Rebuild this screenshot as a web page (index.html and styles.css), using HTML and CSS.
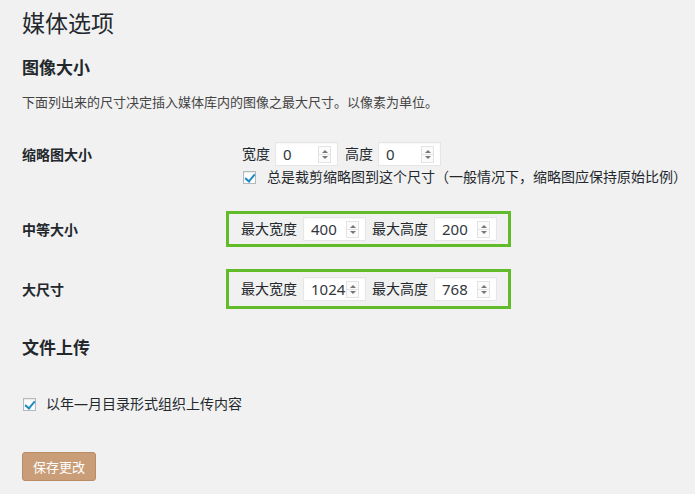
FILE: index.html
```html
<!doctype html>
<html lang="zh-CN">
<head>
  <meta charset="utf-8">
  <title>媒体选项</title>
  <link rel="stylesheet" href="styles.css">
</head>
<body>
  <div class="wrap">
    <h1>媒体选项</h1>
    <h2>图像大小</h2>
    <p class="desc">下面列出来的尺寸决定插入媒体库内的图像之最大尺寸。以像素为单位。</p>

    <table class="form-table">
      <tr>
        <th>缩略图大小</th>
        <td>
          <div class="fields">
            <span class="lbl">宽度</span>
            <span class="num"><span class="val">0</span><span class="spin"></span></span>
            <span class="lbl">高度</span>
            <span class="num"><span class="val">0</span><span class="spin"></span></span>
          </div>
          <label class="check-line">
            <span class="checkbox checked"></span>
            总是裁剪缩略图到这个尺寸（一般情况下，缩略图应保持原始比例）
          </label>
        </td>
      </tr>
      <tr>
        <th>中等大小</th>
        <td>
          <div class="fields mark mark-sm">
            <span class="lbl">最大宽度</span>
            <span class="num"><span class="val">400</span><span class="spin"></span></span>
            <span class="lbl">最大高度</span>
            <span class="num"><span class="val">200</span><span class="spin"></span></span>
          </div>
        </td>
      </tr>
      <tr>
        <th>大尺寸</th>
        <td>
          <div class="fields mark mark-lg">
            <span class="lbl">最大宽度</span>
            <span class="num"><span class="val">1024</span><span class="spin"></span></span>
            <span class="lbl">最大高度</span>
            <span class="num"><span class="val">768</span><span class="spin"></span></span>
          </div>
        </td>
      </tr>
    </table>

    <h2 class="upload-title">文件上传</h2>
    <label class="check-line upload-line">
      <span class="checkbox checked"></span>
      以年—月目录形式组织上传内容
    </label>

    <button class="button-primary">保存更改</button>
  </div>
</body>
</html>
```

FILE: styles.css
```css
/* Page */
* { box-sizing: border-box; }
body {
  margin: 0;
  background: #f1f1f1;
  color: #23282d;
  font-family: "Noto Sans", "Noto Sans CJK SC", sans-serif;
  font-size: 14px;
}
.wrap {
  padding: 0 22px;
}
h1 {
  margin: 8px 0 0;
  font-size: 23px;
  font-weight: 400;
  line-height: 30px;
}
h2 {
  margin: 18px 0 0;
  font-size: 17px;
  font-weight: 700;
  line-height: 24px;
}
.desc {
  margin: 12px 0 0;
  font-size: 13px;
  line-height: 20px;
  color: #444;
}
/* Settings table */
.form-table {
  width: 100%;
  margin-top: 15px;
  border-collapse: collapse;
  table-layout: fixed;
}
.form-table th {
  width: 210px;
  padding: 19px 20px 19px 0;
  text-align: left;
  vertical-align: top;
  font-size: 14px;
  font-weight: 700;
  line-height: 18px;
}
.form-table td {
  padding: 15px 0 15px 10px;
  vertical-align: top;
  white-space: nowrap;
}
.fields {
  display: flex;
  align-items: center;
  height: 24px;
}
.lbl {
  margin-right: 5px;
  line-height: 20px;
}
.num {
  display: flex;
  align-items: center;
  flex-shrink: 0;
  width: 63px;
  height: 24px;
  margin-right: 7px;
  padding: 0 6px 0 7px;
  background: #fff;
  border: 1px solid #e6e6e6;
  box-shadow: inset 0 1px 2px rgba(0, 0, 0, 0.04);
  font-size: 15px;
  color: #32373c;
}
.val {
  flex: 1;
  line-height: 20px;
}
.spin {
  width: 13px;
  height: 17px;
  border: 1px solid #e3e3e3;
  background:
    linear-gradient(#e3e3e3, #e3e3e3) center / 100% 1px no-repeat,
    #fbfbfb;
  position: relative;
}
.spin::before,
.spin::after {
  content: "";
  position: absolute;
  left: 3px;
  border-left: 3px solid transparent;
  border-right: 3px solid transparent;
}
.spin::before {
  top: 3px;
  border-bottom: 3px solid #777;
}
.spin::after {
  bottom: 3px;
  border-top: 3px solid #777;
}
/* Highlight boxes */
.mark {
  border: 3px solid #62bb28;
  width: 285px;
  margin-left: -16px;
  padding-left: 12px;
}
.mark-sm {
  height: 36px;
  margin-top: -6px;
}
.mark-lg {
  height: 40px;
  margin-top: -8px;
  margin-bottom: -8px;
}
.mark .lbl { margin-right: 6px; }
.mark .num { margin-right: 6px; }
/* Checkboxes */
.check-line {
  display: flex;
  align-items: center;
  margin-top: 1px;
  line-height: 20px;
  font-size: 14px;
  white-space: nowrap;
}
.checkbox {
  flex-shrink: 0;
  width: 13px;
  height: 13px;
  margin: 0 11px 0 1px;
  background: #fff;
  border: 1px solid #b4b9be;
  box-shadow: inset 0 1px 2px rgba(0, 0, 0, 0.1);
  position: relative;
}
.checkbox.checked::after {
  content: "";
  position: absolute;
  left: 3px;
  top: 0px;
  width: 4px;
  height: 8px;
  border-right: 2px solid #1e8cbe;
  border-bottom: 2px solid #1e8cbe;
  transform: rotate(40deg);
}
.upload-line {
  margin-top: 34px;
}
.upload-line .checkbox {
  margin-right: 10px;
}
/* Submit */
.button-primary {
  display: block;
  margin-top: 38px;
  height: 29px;
  padding: 0 10px;
  background: #c99d77;
  border: 1px solid #b98c66;
  border-radius: 3px;
  color: #fff;
  font-family: "Noto Sans CJK SC", sans-serif;
  font-size: 13px;
  line-height: 27px;
}
```
